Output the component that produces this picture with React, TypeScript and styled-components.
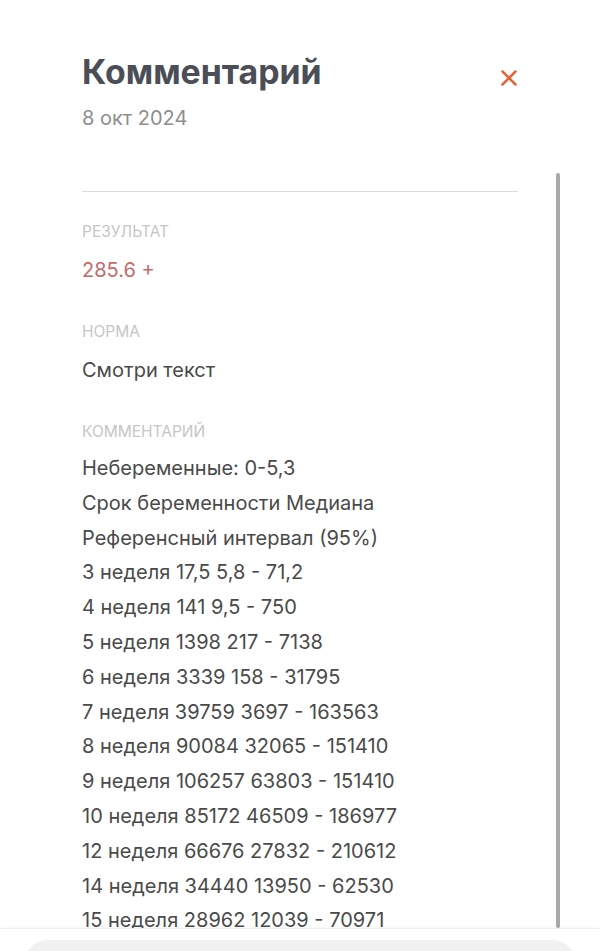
import * as React from "react"
import styled, {createGlobalStyle} from "styled-components"

const GlobalStyle = createGlobalStyle`
  html, body {
    margin: 0;
    padding: 0;
    background: #ffffff;
  }
  body {
    font-family: Inter, "Noto Sans", "DejaVu Sans", sans-serif;
    overflow: hidden;
  }
`

interface Field {
  label: string
  value: string
  accent?: boolean
}

const fields: Field[] = [
  {label: "Результат", value: "285.6 +", accent: true},
  {label: "Норма", value: "Смотри текст"},
]

const commentLines = [
  "Небеременные: 0-5,3",
  "Срок беременности Медиана",
  "Референсный интервал (95%)",
  "3 неделя 17,5 5,8 - 71,2",
  "4 неделя 141 9,5 - 750",
  "5 неделя 1398 217 - 7138",
  "6 неделя 3339 158 - 31795",
  "7 неделя 39759 3697 - 163563",
  "8 неделя 90084 32065 - 151410",
  "9 неделя 106257 63803 - 151410",
  "10 неделя 85172 46509 - 186977",
  "12 неделя 66676 27832 - 210612",
  "14 неделя 34440 13950 - 62530",
  "15 неделя 28962 12039 - 70971",
]

const Page = styled.div`
  height: 951px;
  overflow: hidden;
`
const Header = styled.header`
  height: 130px;
  box-sizing: border-box;
  display: flex;
  justify-content: space-between;
  align-items: flex-start;
  padding: 50px 82px 0 82px;
`
const Title = styled.h1`
  margin: 0;
  font-size: 33.8px;
  line-height: 44px;
  font-weight: 700;
  color: #4b4e56;
`
const DateText = styled.div`
  margin-top: 12px;
  font-size: 20px;
  line-height: 24px;
  color: #8e8e8e;
`
const CloseButton = styled.button`
  border: none;
  background: none;
  padding: 0;
  margin: 18px -1px 0 0;
  width: 20px;
  height: 20px;
  display: flex;
  align-items: center;
  justify-content: center;
  cursor: pointer;
`
const ScrollWrap = styled.div`
  position: relative;
  height: 758px;
  margin-top: 40px;
`
const Scroll = styled.div`
  height: 100%;
  overflow: hidden;
  padding: 21px 82px 0 82px;
  box-sizing: border-box;
`
const Indicator = styled.div`
  position: absolute;
  top: 3px;
  bottom: 0;
  right: 40px;
  width: 4px;
  border-radius: 2px;
  background: #a9a9a9;
`
const Divider = styled.hr`
  margin: 0;
  border: none;
  border-top: 1px solid #dcdcdc;
`
const Section = styled.section<{$first?: boolean}>`
  margin-top: ${p => (p.$first ? "30px" : "40px")};
`
const Label = styled.div`
  font-size: 15.5px;
  line-height: 20px;
  text-transform: uppercase;
  color: #c6c6c6;
`
const Value = styled.div<{$accent?: boolean}>`
  margin-top: 16px;
  font-size: 20px;
  line-height: 24px;
  color: ${p => (p.$accent ? "#c46b6b" : "#4a4a4a")};
`
const Lines = styled.div`
  margin-top: 9px;
`
const Line = styled.div`
  font-size: 20px;
  line-height: 34.8px;
  color: #4a4a4a;
  white-space: nowrap;
`
const Footer = styled.footer`
  position: relative;
  border-top: 1px solid #ececec;
  box-shadow: 0 -1px 3px rgba(0, 0, 0, 0.03);
  padding: 11px 25px 0 25px;
  background: #ffffff;
`
const InputBox = styled.div`
  height: 50px;
  border-radius: 22px;
  background: #f1f1f1;
`

const CloseIcon = () => (
  <svg width="18" height="18" viewBox="0 0 18 18">
    <path d="M2.5 2.5 L15.5 15.5 M15.5 2.5 L2.5 15.5" stroke="#e2653a" strokeWidth="2.5" strokeLinecap="round" />
  </svg>
)

const App = () => {
  return (
    <Page>
      <GlobalStyle />
      <Header>
        <div>
          <Title>Комментарий</Title>
          <DateText>8 окт 2024</DateText>
        </div>
        <CloseButton aria-label="Закрыть">
          <CloseIcon />
        </CloseButton>
      </Header>
      <ScrollWrap>
        <Scroll>
          <Divider />
          {fields.map((field, i) => (
            <Section key={field.label} $first={i === 0}>
              <Label>{field.label}</Label>
              <Value $accent={field.accent}>{field.value}</Value>
            </Section>
          ))}
          <Section>
            <Label>Комментарий</Label>
            <Lines>
              {commentLines.map(line => (
                <Line key={line}>{line}</Line>
              ))}
            </Lines>
          </Section>
        </Scroll>
        <Indicator />
      </ScrollWrap>
      <Footer>
        <InputBox />
      </Footer>
    </Page>
  )
}

export default App
